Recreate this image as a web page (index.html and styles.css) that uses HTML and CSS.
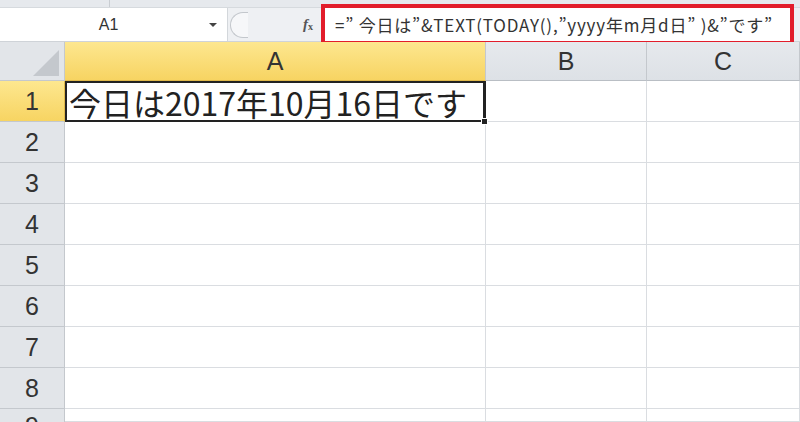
FILE: index.html
```html
<!DOCTYPE html>
<html lang="ja">
<head>
<meta charset="utf-8">
<link rel="stylesheet" href="styles.css">
</head>
<body>
<div class="top"><div class="top-a"></div><div class="top-b"></div></div>
<div class="fbar">
  <div class="namebox"><span class="name">A1</span><span class="arrow"></span></div>
  <div class="split"><span class="pill"></span></div>
  <div class="fx"><i>f</i><span>x</span></div>
  <div class="formula">=” 今日は”&amp;TEXT(TODAY(),”yyyy年m月d日” )&amp;”です”</div>
</div>
<div class="sheet">
  <div class="corner"><span class="tri"></span></div>
  <div class="ch sel">A</div>
  <div class="ch">B</div>
  <div class="ch">C</div>

  <div class="rh sel">1</div>
  <div class="cell active">今日は2017年10月16日です<span class="handle"></span></div>
  <div class="cell"></div>
  <div class="cell"></div>

  <div class="rh">2</div><div class="cell"></div><div class="cell"></div><div class="cell"></div>
  <div class="rh">3</div><div class="cell"></div><div class="cell"></div><div class="cell"></div>
  <div class="rh">4</div><div class="cell"></div><div class="cell"></div><div class="cell"></div>
  <div class="rh">5</div><div class="cell"></div><div class="cell"></div><div class="cell"></div>
  <div class="rh">6</div><div class="cell"></div><div class="cell"></div><div class="cell"></div>
  <div class="rh">7</div><div class="cell"></div><div class="cell"></div><div class="cell"></div>
  <div class="rh">8</div><div class="cell"></div><div class="cell"></div><div class="cell"></div>
  <div class="rh last">9</div><div class="cell"></div><div class="cell"></div><div class="cell"></div>
</div>
</body>
</html>
```
FILE: styles.css
```css
* { box-sizing: border-box; }
html, body { margin: 0; padding: 0; }
body {
  width: 800px; height: 422px; overflow: hidden;
  background: #fff;
  font-family: "Liberation Sans", "Noto Sans CJK JP", sans-serif;
  color: #333;
}
.top { height: 8px; display: flex; background: #e6e9ed; border-bottom: 1px solid #d6dade; }
.top-a { width: 110px; border-right: 1px solid #c9cdd2; }
.top-b { flex: 1; }
.fbar {
  height: 34px; display: flex; align-items: stretch;
  background: #eef0f3; border-bottom: 1px solid #cfd3d8;
}
.namebox {
  width: 228px; background: #fff; border-right: 1px solid #d3d7db;
  display: flex; align-items: center; position: relative;
}
.name { flex: 1; text-align: center; font-size: 16px; color: #333; padding-left: 8px; }
.arrow {
  width: 0; height: 0; margin-right: 10px;
  border-left: 4px solid transparent; border-right: 4px solid transparent;
  border-top: 4px solid #444;
}
.split { width: 75px; display: flex; align-items: center; }
.pill {
  width: 18px; height: 26px; margin-left: 2px;
  border: 1px solid #c3c7cc; border-right: none;
  border-radius: 13px 0 0 13px; background: #f6f7f9;
}
.fx { width: 22px; display: flex; align-items: center; font-family: "Liberation Serif", serif; color: #555; font-size: 15px; }
.fx i { font-weight: bold; }
.fx span { font-size: 10px; font-weight: bold; margin-top: 4px; }
.formula {
  flex: 1; margin-right: 10px; background: #fff;
  outline: 4px solid #e21d2b;
  font-family: "Noto Sans CJK JP", sans-serif; font-size: 17px; color: #333;
  display: flex; align-items: center; padding-left: 10px; letter-spacing: 0.8px;
  white-space: nowrap; overflow: hidden;
}
.sheet {
  display: grid;
  grid-template-columns: 65px 421px 161px 153px;
  grid-template-rows: 39px repeat(8, 41px) 13px;
  overflow: hidden;
}
.corner { background: #e2e5e9; border-right: 1px solid #c4c8cd; border-bottom: 1px solid #c4c8cd; position: relative; }
.tri {
  position: absolute; right: 5px; bottom: 4px; width: 0; height: 0;
  border-left: 26px solid transparent; border-bottom: 26px solid #c4c8cd;
}
.ch {
  background: linear-gradient(#e6e9ed, #dde1e6);
  border-right: 1px solid #c4c8cd; border-bottom: 1px solid #b9bec4;
  display: flex; align-items: center; justify-content: center;
  font-size: 25px; color: #333;
}
.ch.sel { background: linear-gradient(#fde78f, #f7d462); border-bottom-color: #e0b94a; }
.rh {
  background: #e2e5e9;
  border-right: 1px solid #c4c8cd; border-bottom: 1px solid #c4c8cd;
  display: flex; align-items: center; justify-content: center;
  font-size: 25px; color: #333; overflow: hidden;
}
.rh.last { align-items: flex-start; padding-top: 5px; line-height: 1; border-bottom: none; }
.rh.sel { background: linear-gradient(#fde78f, #f7d462); border-right-color: #e0b94a; }
.cell { border-right: 1px solid #dadde1; border-bottom: 1px solid #dadde1; }
.cell.active {
  border: 2px solid #222; border-right-width: 3px; position: relative;
  font-family: "Noto Sans CJK JP", sans-serif; font-size: 32px; color: #222;
  display: flex; align-items: center; padding-left: 2px; white-space: nowrap; line-height: 1;
}
.handle { position: absolute; right: -5px; bottom: -5px; width: 7px; height: 7px; background: #222; border: 1px solid #fff; }
```
